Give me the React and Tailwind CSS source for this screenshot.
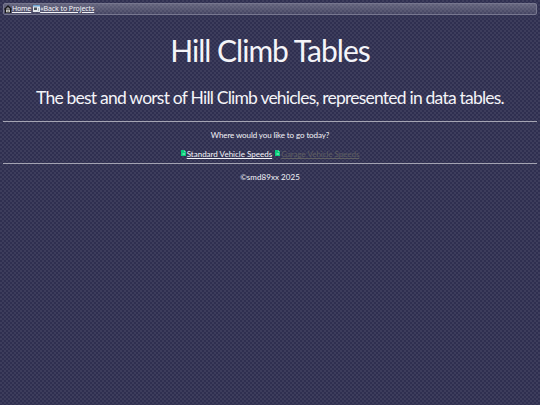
import clsx from "clsx";

const tables = [
    { id: "standard", title: "Standard Vehicle Speeds", ready: true },
    { id: "garage", title: "Garage Vehicle Speeds", ready: false },
];

function HomeIcon() {
    return (
        <svg className="mb-px w-2 h-2 shrink-0" viewBox="0 0 8 8">
            <path d="M0 4 L4 0 L8 4 L7 5 V8 H1 V5 Z" fill="#171719" />
            <path d="M2 3.7 L4 2 L6 3.7 V4 H2 Z" fill="#8d8d91" />
            <path d="M2 4.5 H6 V7.3 H2 Z" fill="#c6c6c6" />
            <path d="M3.5 5.5 H4.7 V7.3 H3.5 Z" fill="#77776f" />
        </svg>
    );
}

function WindowIcon() {
    return (
        <svg className="mb-px w-[7px] h-[7px] shrink-0" viewBox="0 0 7 7">
            <path d="M0 0 H7 V7 H0 Z" fill="#e3e8ed" />
            <path d="M0 0 H7 V1.5 H0 Z" fill="#6ca4d2" />
            <path d="M1 2.5 H4 V5 H1 Z" fill="#4b545c" />
            <path d="M5 3 H6 V6 H5 Z" fill="#a4b1bc" />
        </svg>
    );
}

function FileIcon() {
    return (
        <svg className="mb-0.5 w-[5px] h-[6px] shrink-0" viewBox="0 0 5 6">
            <path d="M0 0 H3 L5 2 V6 H0 Z" fill="#08cf7b" />
            <path d="M3 0 V2 H5 Z" fill="#5ce5a8" />
            <path d="M1.5 3.5 H4 V4.5 H1.5 Z" fill="#a5f5cf" />
        </svg>
    );
}

export default function App() {
    return (
        <div className="min-h-screen overflow-hidden bg-[#2f2f50] bg-[repeating-conic-gradient(#3d3d5c_0_25%,#2f2f50_0_50%)] bg-size-[4px_4px] px-[3px] pt-[3px] font-['Lato',sans-serif] text-[#f4f4f8] whitespace-nowrap">
            {/* Navigation */}
            <nav className="flex h-3 items-center rounded-xs border border-[#77778f] bg-linear-to-b from-white/25 to-white/10 font-['Noto_Sans',sans-serif] text-[7px] leading-[10px]">
                <HomeIcon />
                <a href="#home" className="tracking-[-0.2px] underline">Home</a>
                <span className="w-[2px]" />
                <WindowIcon />
                <a href="#projects" className="tracking-[-0.1px] underline">«Back to Projects</a>
            </nav>

            {/* Title */}
            <header className="flex flex-col items-center">
                <h1 className="mt-[17px] h-9 text-[30px] leading-9 font-normal tracking-[-0.98px]">Hill Climb Tables</h1>
                <h2 className="mt-[18px] h-6 text-[17.5px] leading-6 font-normal tracking-[-0.78px]">
                    The best and worst of Hill Climb vehicles, represented in data tables.
                </h2>
            </header>

            <hr className="mt-[11px] border-[#a4a4b3]" />

            {/* Links */}
            <main className="flex flex-col items-center text-[8px] leading-3">
                <p className="mt-[7px] tracking-[-0.1px]">Where would you like to go today?</p>
                <div className="mt-[7px] flex items-center gap-[3px]">
                    {tables.map((table) => (
                        <div key={table.id} className="flex items-center gap-px">
                            <FileIcon />
                            <a href={table.ready ? `#${table.id}` : undefined} className={clsx("underline", !table.ready && "tracking-[-0.05px] text-[#5f5f62]")}>
                                {table.title}
                            </a>
                        </div>
                    ))}
                </div>
            </main>

            <hr className="mt-[3px] border-[#a4a4b3]" />
            <footer className="mt-[7px] text-center text-[8px] leading-3 tracking-[0.05px]">©smd89xx 2025</footer>
        </div>
    );
}
